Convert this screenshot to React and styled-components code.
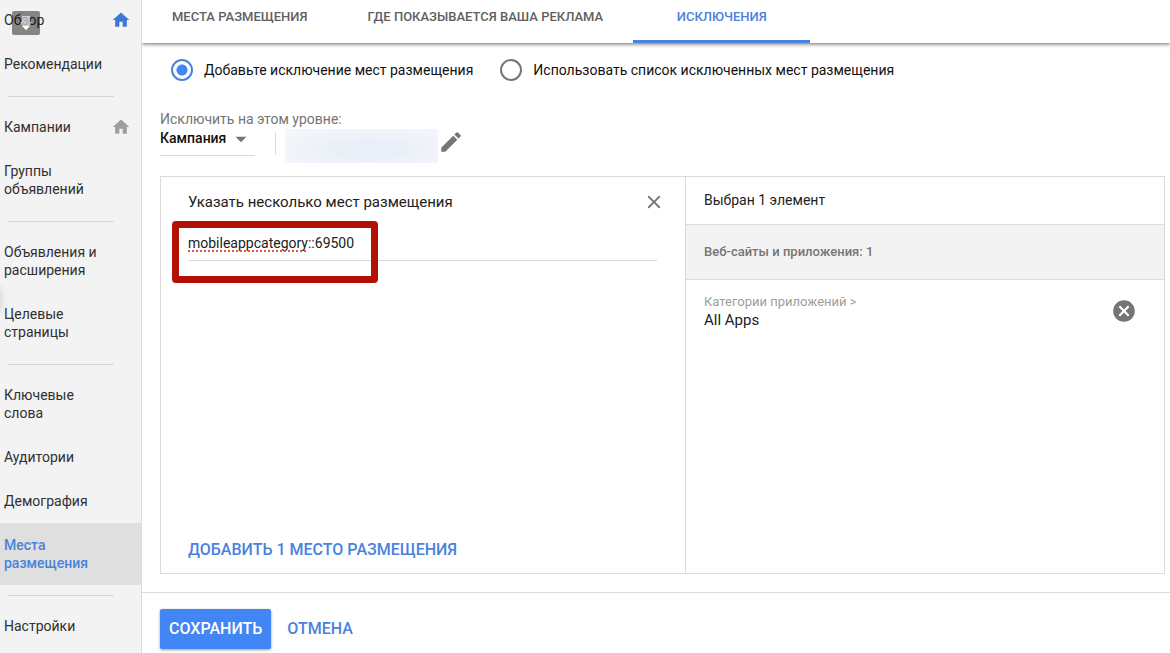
import { useState } from "react";
import styled, { createGlobalStyle, css } from "styled-components";
import { MdArrowDropDown, MdCancel, MdClose, MdCreate, MdHome } from "react-icons/md";

const GlobalStyle = createGlobalStyle`
  * {
    box-sizing: border-box;
  }

  body {
    margin: 0;
    background: #fff;
    color: #212121;
    font-family: Roboto, "Noto Sans", sans-serif;
    font-size: 14px;
    line-height: 18px;
  }

  button,
  input,
  select {
    font: inherit;
    color: inherit;
  }
`;

const Page = styled.div`
  display: flex;
  height: 100vh;
  overflow: hidden;
`;

const Sidebar = styled.nav`
  position: relative;
  flex: none;
  width: 142px;
  background: #f3f3f3;
  border-right: 1px solid #dcdcdc;
  overflow: hidden;
`;

const NavList = styled.div`
  margin-top: -2px;
`;

const NavLink = styled.a`
  display: flex;
  align-items: center;
  justify-content: space-between;
  padding: 13px 10px 13px 4px;
  color: #303030;
  text-decoration: none;

  ${({ $active }) =>
    $active &&
    css`
      background: #dfdfdf;
      color: #4a82dc;
      font-weight: 500;
    `}
`;

const NavLabel = styled.span`
  max-width: 104px;
`;

const HomeIcon = styled(MdHome)`
  flex: none;
  width: 20px;
  height: 20px;
  margin: -1px 0;
  color: ${({ $current }) => ($current ? "#3c78d8" : "#9e9e9e")};
`;

const NavDivider = styled.hr`
  height: 1px;
  margin: 10px 27px 8px 8px;
  border: none;
  background: #d6d6d6;
`;

const ShieldBadge = styled.div`
  position: absolute;
  top: 11px;
  left: 12px;
  width: 28px;
  height: 24px;
  border-radius: 2px;
  background: rgba(0, 0, 0, 0.45);
`;

const DrawerShadow = styled.div`
  position: absolute;
  top: 286px;
  left: -14px;
  width: 12px;
  height: 28px;
  border-radius: 50%;
  box-shadow: 0 0 10px rgba(0, 0, 0, 0.3);
`;

const Main = styled.main`
  flex: 1;
  display: flex;
  flex-direction: column;
  min-width: 0;
`;

const Tabs = styled.div`
  flex: none;
  display: flex;
  height: 43px;
  box-shadow: 0 1px 4px rgba(0, 0, 0, 0.6);
`;

const Tab = styled.button`
  min-width: 177px;
  padding: 0 30px 7px;
  border: none;
  border-bottom: 3px solid ${({ $active }) => ($active ? "#4a82dc" : "transparent")};
  background: none;
  color: ${({ $active }) => ($active ? "#4a82dc" : "#5f5f5f")};
  font-size: 13px;
  font-weight: 500;
  text-transform: uppercase;
  cursor: pointer;
`;

const Content = styled.div`
  flex: 1;
  display: flex;
  flex-direction: column;
  padding: 16px 5px 18px 18px;
`;

const RadioGroup = styled.div`
  display: flex;
  gap: 27px;
  padding-left: 11px;
`;

const RadioLabel = styled.label`
  display: flex;
  align-items: center;
  gap: 11px;
  color: #111;
  cursor: pointer;
`;

const Radio = styled.input`
  appearance: none;
  width: 22px;
  height: 22px;
  margin: 0;
  border: 2px solid #757575;
  border-radius: 50%;

  &:checked {
    border-color: #4a82dc;
    background: radial-gradient(circle, #4285f4 5px, transparent 6px);
  }
`;

const LevelLabel = styled.label`
  margin-top: 29px;
  color: #757575;
`;

const LevelRow = styled.div`
  display: flex;
  align-items: flex-start;
  height: 36px;
  margin-bottom: 12px;
  padding-top: 1px;
`;

const SelectBox = styled.div`
  position: relative;
  width: 95px;
  border-bottom: 1px solid #dcdcdc;
`;

const LevelSelect = styled.select`
  appearance: none;
  display: block;
  width: 100%;
  height: 26px;
  padding: 0 0 8px;
  border: none;
  background: none;
  color: #111;
  font-weight: 500;
`;

const SelectArrow = styled(MdArrowDropDown)`
  position: absolute;
  top: -3px;
  right: 1px;
  width: 26px;
  height: 26px;
  color: #757575;
  pointer-events: none;
`;

const LevelSeparator = styled.div`
  width: 1px;
  height: 23px;
  margin: 3px 9px 0 20px;
  background: #dcdcdc;
`;

const HiddenName = styled.div`
  width: 153px;
  height: 34px;
  background: radial-gradient(ellipse at 55% 60%, #e9eef7 20%, #f3f6fb 80%);
`;

const IconButton = styled.button`
  display: flex;
  padding: 0;
  border: none;
  background: none;
  color: #757575;
  cursor: pointer;
`;

const Panel = styled.div`
  flex: 1;
  display: grid;
  grid-template-columns: 524fr 479fr;
  border: 1px solid #dcdcdc;
`;

const Editor = styled.section`
  display: flex;
  flex-direction: column;
  align-items: flex-start;
  padding: 15px 28px 14px 27px;
`;

const EditorHeader = styled.div`
  display: flex;
  align-items: center;
  justify-content: space-between;
  align-self: stretch;
  height: 20px;
  margin-right: -8px;
  font-size: 15px;
`;

const PlacementField = styled.div`
  position: relative;
  align-self: stretch;
  margin-top: 19px;
`;

const PlacementInput = styled.input`
  display: block;
  width: 100%;
  height: 30px;
  padding: 0 0 6px;
  border: none;
  border-bottom: 1px solid #dcdcdc;
  outline: none;
  background: none;
`;

const SpellingMark = styled.div`
  position: absolute;
  top: 19px;
  left: 0;
  width: 120px;
  height: 2px;
  background: repeating-linear-gradient(90deg, #e0564f 0 2px, transparent 2px 4px);
`;

const RedFrame = styled.div`
  position: absolute;
  top: -10px;
  left: -16px;
  width: 206px;
  height: 62px;
  border: 7px solid #b31005;
  border-radius: 4px;
  pointer-events: none;
`;

const TextButton = styled.button`
  padding: 0;
  border: none;
  background: none;
  color: #4a82dc;
  font-size: 16px;
  font-weight: 500;
  text-transform: uppercase;
  cursor: pointer;
`;

const AddButton = styled(TextButton)`
  margin-top: auto;
`;

const Selection = styled.section`
  border-left: 1px solid #dcdcdc;
`;

const SelectionTitle = styled.div`
  padding: 14px 18px 15px;
`;

const SelectionGroup = styled.div`
  padding: 18px;
  border: solid #dcdcdc;
  border-width: 1px 0;
  background: #f3f3f3;
  color: #757575;
  font-size: 13px;
  font-weight: 500;
`;

const SelectionItem = styled.div`
  display: flex;
  align-items: center;
  justify-content: space-between;
  padding: 13px 27px 13px 18px;
  font-size: 15px;
`;

const ItemCategory = styled.div`
  color: #9e9e9e;
  font-size: 13px;
`;

const Footer = styled.footer`
  flex: none;
  display: flex;
  align-items: center;
  gap: 16px;
  padding: 16px 18px 4px;
  border-top: 1px solid #dcdcdc;
`;

const SaveButton = styled(TextButton)`
  height: 40px;
  padding: 0 9px;
  border-radius: 2px;
  background: #4285f4;
  box-shadow: 0 1px 3px rgba(0, 0, 0, 0.4);
  color: #fff;
`;

const navItems = [
  { label: "Обзор", home: "current" },
  { label: "Рекомендации", divider: true },
  { label: "Кампании", home: "other" },
  { label: "Группы объявлений", divider: true },
  { label: "Объявления и расширения" },
  { label: "Целевые страницы", divider: true },
  { label: "Ключевые слова" },
  { label: "Аудитории" },
  { label: "Демография" },
  { label: "Места размещения", active: true, divider: true },
  { label: "Настройки" },
];

const tabs = ["Места размещения", "Где показывается ваша реклама", "Исключения"];

const App = () => {
  const [tab, setTab] = useState(tabs[2]);
  const [mode, setMode] = useState("add");
  const [placement, setPlacement] = useState("mobileappcategory::69500");

  return (
    <Page>
      <GlobalStyle />
      <Sidebar>
        <NavList>
          {navItems.map((item) => (
            <div key={item.label}>
              <NavLink href="#" $active={item.active}>
                <NavLabel>{item.label}</NavLabel>
                {item.home && <HomeIcon $current={item.home === "current"} />}
              </NavLink>
              {item.divider && <NavDivider />}
            </div>
          ))}
        </NavList>
        {/* translucent, the label below shows through */}
        <ShieldBadge>
          <svg width="28" height="24" viewBox="0 0 28 24" aria-hidden="true">
            <path d="M10 5h8v6h2l-6 8-6-8h2z" fill="#fff" fillOpacity="0.6" />
            <path d="M10 15l4 4 4-4z" fill="#fff" />
          </svg>
        </ShieldBadge>
        <DrawerShadow />
      </Sidebar>

      <Main>
        <Tabs role="tablist">
          {tabs.map((name) => (
            <Tab
              key={name}
              role="tab"
              aria-selected={tab === name}
              $active={tab === name}
              onClick={() => setTab(name)}
            >
              {name}
            </Tab>
          ))}
        </Tabs>

        <Content>
          <RadioGroup>
            <RadioLabel>
              <Radio type="radio" name="mode" checked={mode === "add"} onChange={() => setMode("add")} />
              Добавьте исключение мест размещения
            </RadioLabel>
            <RadioLabel>
              <Radio type="radio" name="mode" checked={mode === "list"} onChange={() => setMode("list")} />
              Использовать список исключенных мест размещения
            </RadioLabel>
          </RadioGroup>

          <LevelLabel htmlFor="level">Исключить на этом уровне:</LevelLabel>
          <LevelRow>
            <SelectBox>
              <LevelSelect id="level">
                <option>Кампания</option>
              </LevelSelect>
              <SelectArrow />
            </SelectBox>
            <LevelSeparator />
            <HiddenName />
            <IconButton aria-label="Изменить">
              <MdCreate size={26} />
            </IconButton>
          </LevelRow>

          <Panel>
            <Editor>
              <EditorHeader>
                <label htmlFor="placement">Указать несколько мест размещения</label>
                <IconButton aria-label="Закрыть">
                  <MdClose size={22} />
                </IconButton>
              </EditorHeader>
              <PlacementField>
                <PlacementInput
                  id="placement"
                  value={placement}
                  onChange={(e) => setPlacement(e.target.value)}
                />
                <SpellingMark />
                <RedFrame />
              </PlacementField>
              <AddButton>Добавить 1 место размещения</AddButton>
            </Editor>

            <Selection>
              <SelectionTitle>Выбран 1 элемент</SelectionTitle>
              <SelectionGroup>Веб-сайты и приложения: 1</SelectionGroup>
              <SelectionItem>
                <div>
                  <ItemCategory>Категории приложений &gt;</ItemCategory>
                  All Apps
                </div>
                <IconButton aria-label="Удалить">
                  <MdCancel size={26} />
                </IconButton>
              </SelectionItem>
            </Selection>
          </Panel>
        </Content>

        <Footer>
          <SaveButton>Сохранить</SaveButton>
          <TextButton>Отмена</TextButton>
        </Footer>
      </Main>
    </Page>
  );
};

export default App;
